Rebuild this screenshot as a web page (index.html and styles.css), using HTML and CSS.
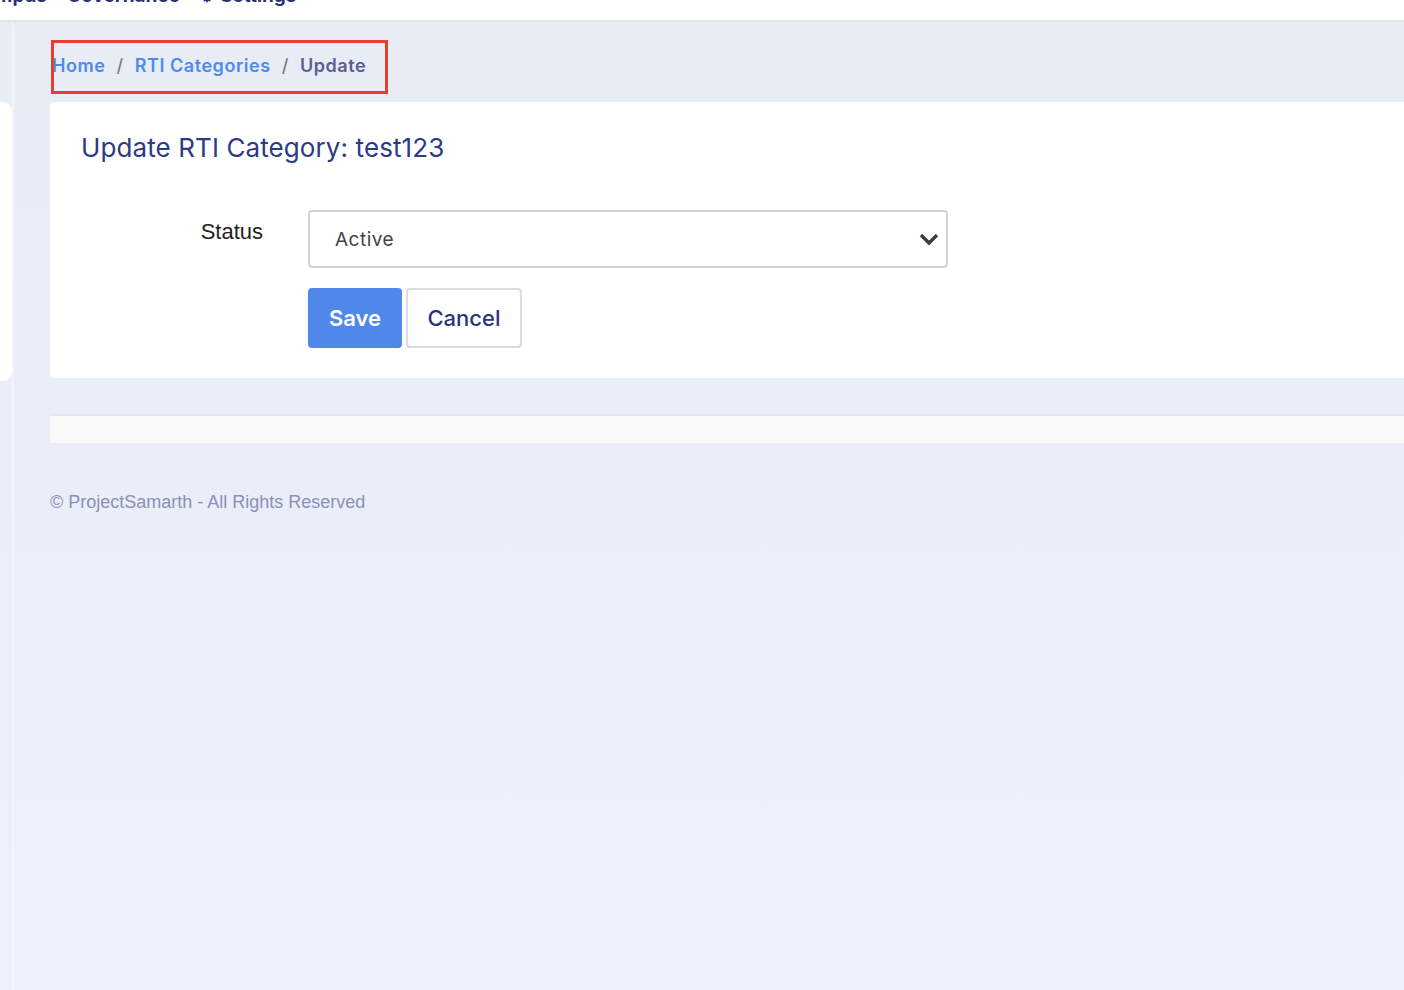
FILE: index.html
```html
<!DOCTYPE html>
<html lang="en">
<head>
<meta charset="utf-8">
<title>Update RTI Category</title>
<link rel="stylesheet" href="styles.css">
</head>
<body>
<header class="topbar">
  <nav class="topnav">
    <span class="nav-item first">Campus</span>
    <span class="nav-item">Governance</span>
    <span class="nav-item"><svg class="gear" viewBox="0 0 16 16" width="14" height="14"><path fill="#2b3375" d="M8 0l1.2 2.2 2.4-.8.3 2.5 2.5.3-.8 2.4L16 8l-2.2 1.2.8 2.4-2.5.3-.3 2.5-2.4-.8L8 16l-1.2-2.2-2.4.8-.3-2.5-2.5-.3.8-2.4L0 8l2.2-1.2-.8-2.4 2.5-.3.3-2.5 2.4.8z"/><circle cx="8" cy="8" r="2.6" fill="#fff"/></svg> Settings</span>
  </nav>
</header>
<div class="layout">
  <aside class="sidebar">
    <div class="side-card"></div>
  </aside>
  <div class="divider"></div>
  <main class="main">
    <div class="breadcrumb-wrap">
      <ol class="breadcrumb">
        <li class="crumb link">Home</li>
        <li class="sep">/</li>
        <li class="crumb link">RTI Categories</li>
        <li class="sep">/</li>
        <li class="crumb current">Update</li>
      </ol>
      <div class="highlight"></div>
    </div>
    <section class="card">
      <h1 class="title">Update RTI Category: test123</h1>
      <form class="form">
        <div class="row">
          <label class="label">Status</label>
          <div class="select">
            <span class="select-value">Active</span>
            <svg class="chevron" viewBox="0 0 20 14" width="20" height="14"><path d="M2 3l8 8 8-8" fill="none" stroke="#3a3d45" stroke-width="3.4"/></svg>
          </div>
        </div>
        <div class="row actions">
          <span class="label"></span>
          <div class="buttons">
            <button type="button" class="btn btn-save">Save</button>
            <button type="button" class="btn btn-cancel">Cancel</button>
          </div>
        </div>
      </form>
    </section>
    <div class="bar"></div>
    <footer class="footer">© ProjectSamarth - All Rights Reserved</footer>
  </main>
</div>
</body>
</html>
```

FILE: styles.css
```css
html, body {
  margin: 0;
  padding: 0;
}
body {
  min-height: 990px;
  background: linear-gradient(#e8ecf5 0%, #eaeef8 50%, #edf1fb 100%);
  font-family: Inter, "Liberation Sans", sans-serif;
  overflow: hidden;
}
.topbar {
  height: 20px;
  background: #fff;
  border-bottom: 2px solid #e3e5ea;
  overflow: hidden;
}
.topnav {
  display: flex;
  align-items: center;
  gap: 20px;
  margin-top: -17px;
  margin-left: -30px;
  font-size: 19px;
  font-weight: 700;
  color: #2b3375;
  line-height: 26px;
  white-space: nowrap;
}
.nav-item {
  display: flex;
  align-items: center;
  gap: 6px;
}
.layout {
  display: flex;
  min-height: 968px;
}
.sidebar {
  width: 12px;
  padding-top: 80px;
}
.side-card {
  height: 279px;
  background: #fff;
  border-radius: 0 9px 9px 0;
}
.divider {
  width: 2px;
  background: #f3f5fb;
}
.main {
  flex: 1;
  padding-left: 36px;
  display: flex;
  flex-direction: column;
}
.breadcrumb-wrap {
  position: relative;
  margin-top: 18px;
  height: 54px;
  width: 337px;
  margin-left: 1px;
}
.breadcrumb {
  list-style: none;
  margin: 0;
  padding: 0 0 4px 1px;
  box-sizing: border-box;
  display: flex;
  align-items: center;
  height: 54px;
  gap: 11px;
  font-size: 18px;
  font-weight: 600;
  letter-spacing: 0.55px;
}
.crumb.link { color: #4d8bef; }
.crumb.current { color: #5b5f93; }
.sep { color: #7c7c7c; font-weight: 500; }
.highlight {
  position: absolute;
  left: 0;
  top: 0;
  right: 0;
  bottom: 0;
  border: 3px solid #e5402b;
}
.card {
  margin-top: 8px;
  background: #fff;
  border-radius: 4px 0 0 4px;
  padding: 29px 0 30px 31px;
}
.title {
  margin: 0;
  font-size: 26px;
  font-weight: 400;
  color: #2d3a85;
  line-height: 34px;
  letter-spacing: 0.1px;
}
.form {
  margin-top: 45px;
  display: flex;
  flex-direction: column;
  gap: 20px;
}
.row {
  display: flex;
  align-items: flex-start;
}
.label {
  width: 182px;
  text-align: right;
  font-family: "Liberation Sans", Arial, sans-serif;
  font-size: 22px;
  color: #222;
  padding-top: 9px;
}
.select {
  box-sizing: border-box;
  margin-left: 45px;
  width: 640px;
  height: 58px;
  border: 2px solid #d3d3d6;
  border-radius: 4px;
  display: flex;
  align-items: center;
  justify-content: space-between;
  padding: 0 7px 0 25px;
}
.select-value {
  font-size: 19px;
  color: #444;
  letter-spacing: 0.5px;
}
.chevron { display: block; }
.actions .label { padding-top: 0; }
.buttons {
  margin-left: 45px;
  display: flex;
  gap: 4px;
}
.btn {
  height: 60px;
  border-radius: 4px;
  font-family: Inter, "Liberation Sans", sans-serif;
  font-size: 22px;
  cursor: pointer;
}
.btn-save {
  width: 94px;
  background: #5088ea;
  border: none;
  color: #fff;
  font-weight: 600;
}
.btn-cancel {
  width: 116px;
  background: #fff;
  border: 2px solid #dcdcdc;
  color: #293479;
  font-weight: 500;
}
.bar {
  margin-top: 36px;
  height: 27px;
  background: #f9f9f9;
  border-top: 2px solid #e6e7ea;
  border-bottom: 1px solid #eceef2;
}
.footer {
  margin-top: 48px;
  font-family: "Liberation Sans", Arial, sans-serif;
  font-size: 18px;
  color: #8a90ba;
}
```
